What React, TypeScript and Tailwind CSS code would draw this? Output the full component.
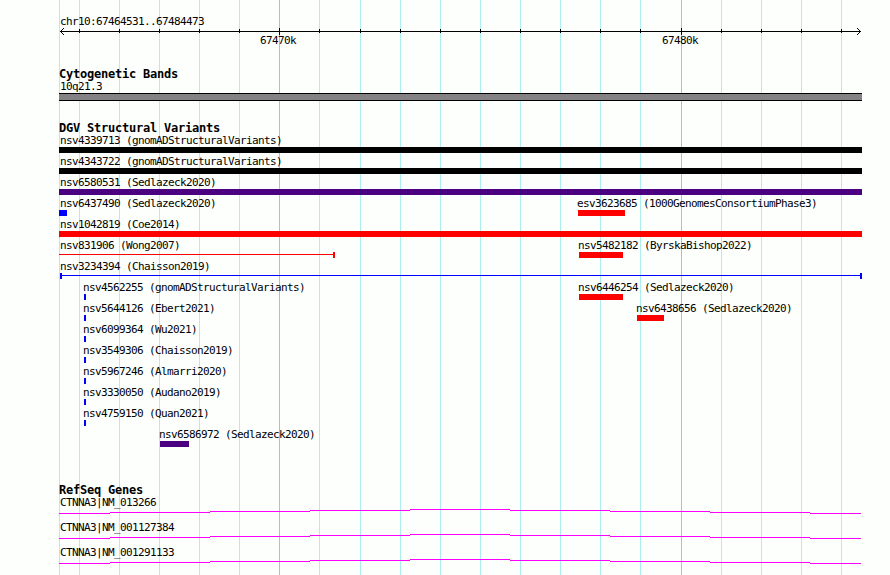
import React from "react";

type Feature = {
  label: string;
  x: number;
  labelX?: number;
  width: number;
  color: string;
  kind?: "bar" | "range-right" | "range-both";
};

// Horizontal units are pixels from the left edge of the region.
const REGION_WIDTH = 803;

const MINOR = [0, 20, 60, 100, 140, 180, 260, 301, 341, 381, 421, 461, 501, 541, 581, 662, 702, 742, 782];
const MAJOR = [220, 622];

const BLACK = "#000000";
const INDIGO = "#4b0082";
const BLUE = "#0000ff";
const RED = "#ff0000";

const tick = (label: string): Feature => ({ label, x: 25, labelX: 24, width: 2, color: BLUE });

const VARIANTS: Feature[][] = [
  [{ label: "nsv4339713 (gnomADStructuralVariants)", x: 0, width: 803, color: BLACK }],
  [{ label: "nsv4343722 (gnomADStructuralVariants)", x: 0, width: 803, color: BLACK }],
  [{ label: "nsv6580531 (Sedlazeck2020)", x: 0, width: 803, color: INDIGO }],
  [
    { label: "nsv6437490 (Sedlazeck2020)", x: 0, width: 8, color: BLUE },
    { label: "esv3623685 (1000GenomesConsortiumPhase3)", x: 519, labelX: 518, width: 47, color: RED },
  ],
  [{ label: "nsv1042819 (Coe2014)", x: 0, width: 803, color: RED }],
  [
    { label: "nsv831906 (Wong2007)", x: 0, width: 276, color: RED, kind: "range-right" },
    { label: "nsv5482182 (ByrskaBishop2022)", x: 520, labelX: 519, width: 44, color: RED },
  ],
  [{ label: "nsv3234394 (Chaisson2019)", x: 1, labelX: 1, width: 802, color: BLUE, kind: "range-both" }],
  [
    tick("nsv4562255 (gnomADStructuralVariants)"),
    { label: "nsv6446254 (Sedlazeck2020)", x: 520, labelX: 519, width: 44, color: RED },
  ],
  [
    tick("nsv5644126 (Ebert2021)"),
    { label: "nsv6438656 (Sedlazeck2020)", x: 578, labelX: 577, width: 27, color: RED },
  ],
  [tick("nsv6099364 (Wu2021)")],
  [tick("nsv3549306 (Chaisson2019)")],
  [tick("nsv5967246 (Almarri2020)")],
  [tick("nsv3330050 (Audano2019)")],
  [tick("nsv4759150 (Quan2021)")],
  [{ label: "nsv6586972 (Sedlazeck2020)", x: 101, labelX: 100, width: 29, color: INDIGO }],
];

const GENES = ["CTNNA3|NM_013266", "CTNNA3|NM_001127384", "CTNNA3|NM_001291133"];

function GridLines() {
  return (
    <div className="absolute inset-0">
      {MINOR.map((x) => (
        <div key={x} className="absolute top-0 h-full w-px bg-[#afeeee]" style={{ left: x }} />
      ))}
      {MAJOR.map((x) => (
        <div key={x} className="absolute top-0 h-full w-px bg-[#87ceeb]" style={{ left: x }} />
      ))}
    </div>
  );
}

function Ruler() {
  return (
    <svg className="block h-[7px] w-[803px]" viewBox="0 0 803 7" shapeRendering="crispEdges">
      <rect x="1" y="3" width="801" height="1" />
      {MINOR.slice(1).map((x) => (
        <rect key={x} x={x} y="1" width="1" height="4" />
      ))}
      {MAJOR.map((x) => (
        <rect key={x} x={x} y="0" width="1" height="7" />
      ))}
      {[1, 2, 3].map((d) => (
        <g key={d}>
          <rect x={1 + d} y={3 - d} width="1" height="1" />
          <rect x={1 + d} y={3 + d} width="1" height="1" />
          <rect x={801 - d} y={3 - d} width="1" height="1" />
          <rect x={801 - d} y={3 + d} width="1" height="1" />
        </g>
      ))}
    </svg>
  );
}

function Title({ children }: { children: React.ReactNode }) {
  return <h2 className="h-[13px] text-[12px] leading-[14px] font-bold tracking-[-0.224px]">{children}</h2>;
}

function Glyph({ feature }: { feature: Feature }) {
  const { width, color, kind = "bar" } = feature;
  if (kind === "bar") {
    return <div className="h-[6px]" style={{ width, backgroundColor: color }} />;
  }
  return (
    <div className="flex h-[6px]" style={{ width }}>
      {kind === "range-both" && <div className="w-[2px]" style={{ backgroundColor: color }} />}
      <div className="mt-[2px] h-px flex-1" style={{ backgroundColor: color }} />
      <div className="w-[2px]" style={{ backgroundColor: color }} />
    </div>
  );
}

function VariantRow({ features }: { features: Feature[] }) {
  return (
    <div className="grid h-[21px]">
      {features.map((f) => (
        <div key={f.label} className="col-start-1 row-start-1">
          <div className="h-[13px]" style={{ paddingLeft: f.labelX ?? 1 }}>
            {f.label}
          </div>
          <div style={{ paddingLeft: f.x }}>
            <Glyph feature={f} />
          </div>
        </div>
      ))}
    </div>
  );
}

function GeneRow({ label }: { label: string }) {
  return (
    <div className="h-[25px]">
      <div className="h-[13px] pl-px">{label}</div>
      <svg className="block h-[5px] w-[803px]" viewBox="0 0 803 5" fill="#ff00ff" shapeRendering="crispEdges">
        <rect x="0" y="4" width="51" height="1" />
        <rect x="51" y="3" width="100" height="1" />
        <rect x="151" y="2" width="100" height="1" />
        <rect x="251" y="1" width="100" height="1" />
        <rect x="351" y="0" width="100" height="1" />
        <rect x="451" y="1" width="100" height="1" />
        <rect x="551" y="2" width="100" height="1" />
        <rect x="651" y="3" width="100" height="1" />
        <rect x="751" y="4" width="51" height="1" />
      </svg>
    </div>
  );
}

export default function App() {
  return (
    <main className="h-[575px] w-[890px] overflow-hidden bg-[#fcfffc] pl-[59px] font-['DejaVu_Sans_Mono','Liberation_Mono',monospace] text-[11px] leading-[13px] tracking-[-0.622px] whitespace-pre text-black">
      <div className="relative h-full" style={{ width: REGION_WIDTH }}>
        <GridLines />
        <div className="relative flex flex-col">
          <header className="h-[67px] pt-[15px]">
            <div className="h-[13px] pl-px">chr10:67464531..67484473</div>
            <Ruler />
            <div className="-mt-px flex">
              <span className="ml-[201px] w-[402px]">67470k</span>
              <span>67480k</span>
            </div>
          </header>
          <section className="h-[54px]">
            <Title>Cytogenetic Bands</Title>
            <div className="h-[13px] pl-px">10q21.3</div>
            <div className="h-[8px] border-y border-black bg-[#848284]" />
          </section>
          <section className="h-[362px]">
            <Title>DGV Structural Variants</Title>
            {VARIANTS.map((features) => (
              <VariantRow key={features[0].label} features={features} />
            ))}
          </section>
          <section>
            <Title>RefSeq Genes</Title>
            {GENES.map((g) => (
              <GeneRow key={g} label={g} />
            ))}
          </section>
        </div>
      </div>
    </main>
  );
}
